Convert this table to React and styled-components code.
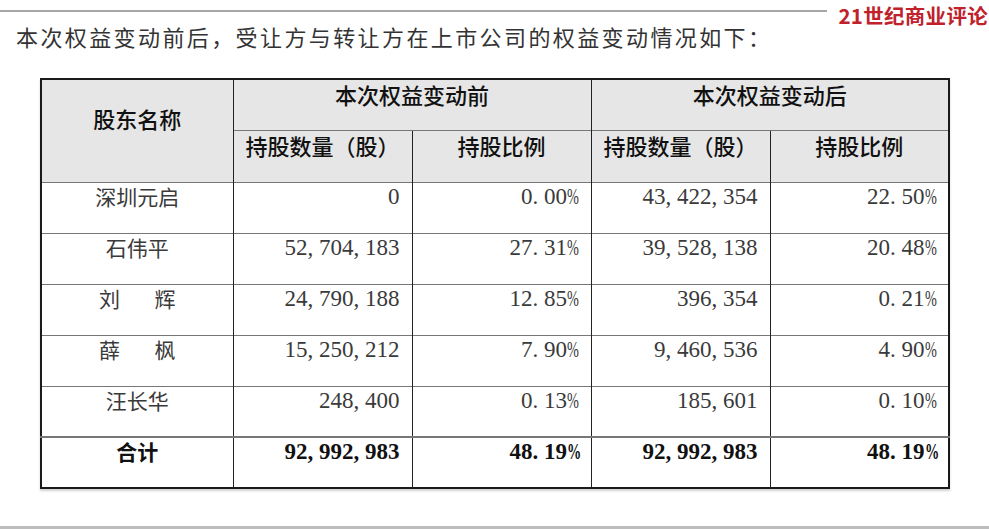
import React from 'react'
import styled, { createGlobalStyle } from 'styled-components'

const GlobalStyle = createGlobalStyle`
  html, body {
    margin: 0;
    padding: 0;
    background: #fff;
  }
`

const cjk = `"Noto Sans CJK SC", "Noto Sans", sans-serif`
const serif = `"Liberation Serif", "Noto Sans CJK SC", serif`

const Page = styled.div`
  height: 529px;
  width: 989px;
  display: flex;
  flex-direction: column;
  overflow: hidden;
  font-family: ${cjk};
`

const TopBar = styled.div`
  height: 22px;
  display: flex;
  align-items: center;
`

const Rule = styled.div`
  flex: 1;
  height: 2px;
  background: #a6a6a6;
  margin-right: 11px;
`

const Logo = styled.div`
  align-self: flex-start;
  font-size: 20.5px;
  font-weight: 700;
  line-height: normal;
  letter-spacing: 0.3px;
  color: #c0212b;
  white-space: nowrap;
  margin-right: 1px;
`

const Title = styled.p`
  margin: 2px 0 0;
  padding-left: 16px;
  font-size: 22px;
  line-height: 24px;
  letter-spacing: 2.4px;
  color: #333;
  white-space: nowrap;
`

const Table = styled.table`
  margin: 30px 0 0 40px;
  width: 908px;
  border-collapse: collapse;
  table-layout: fixed;
  border: 2px solid #1a1a1a;
  box-shadow: 0 2px 2px rgba(0, 0, 0, 0.18);
`

const HeadRow = styled.tr`
  height: ${p => p.$h}px;
  background: #e6e6e6;
`

const BodyRow = styled.tr`
  height: 51px;
`

const HeadCell = styled.th`
  vertical-align: top;
  padding: ${p => p.$top ?? 0}px 0 0;
  font-size: 22px;
  line-height: 28px;
  font-weight: 500;
  color: #111;
  text-align: center;
  border-left: 1px solid #222;
  border-top: 1px solid #777;
  white-space: nowrap;
`

const Cell = styled.td`
  vertical-align: top;
  padding: 0 12px 0 0;
  text-align: ${p => (p.$center ? 'center' : 'right')};
  font-family: ${p => (p.$center ? cjk : serif)};
  font-size: ${p => (p.$center ? 21 : 23)}px;
  font-weight: ${p => (p.$bold ? 700 : 400)};
  line-height: ${p => (p.$center ? 26 : 28)}px;
  color: ${p => (p.$bold ? '#111' : '#3a3a3a')};
  border-left: 1px solid #222;
  border-top: ${p => (p.$bold ? '2px solid #777' : '1px solid #777')};
  white-space: nowrap;
  ${p => p.$center && 'padding: 0;'}
`

const Spread = styled.span`
  display: inline-flex;
  justify-content: space-between;
  width: 3.65em;
`

const Punct = styled.span`
  display: inline-block;
  width: 0.5em;
  text-align: left;
`

const Pct = styled.span`
  display: inline-block;
  width: 0.5em;
  text-align: left;
  transform: scaleX(0.62);
  transform-origin: left center;
`

const BottomBar = styled.div`
  margin-top: auto;
  height: 3px;
  background: #bdbdbd;
`

const Num = ({ value }) =>
  value.split('').map((c, i) =>
    c === ',' || c === '.' ? (
      <Punct key={i}>{c}</Punct>
    ) : c === '%' ? (
      <Pct key={i}>%</Pct>
    ) : (
      c
    )
  )

const rows = [
  { name: '深圳元启', a: '0', b: '0.00%', c: '43,422,354', d: '22.50%' },
  { name: '石伟平', a: '52,704,183', b: '27.31%', c: '39,528,138', d: '20.48%' },
  { name: ['刘', '辉'], a: '24,790,188', b: '12.85%', c: '396,354', d: '0.21%' },
  { name: ['薛', '枫'], a: '15,250,212', b: '7.90%', c: '9,460,536', d: '4.90%' },
  { name: '汪长华', a: '248,400', b: '0.13%', c: '185,601', d: '0.10%' },
]

export default function App() {
  return (
    <Page>
      <GlobalStyle />
      <TopBar>
        <Rule />
        <Logo>21世纪商业评论</Logo>
      </TopBar>
      <Title>本次权益变动前后，受让方与转让方在上市公司的权益变动情况如下：</Title>
      <Table>
        <colgroup>
          <col style={{ width: 192 }} />
          <col style={{ width: 179 }} />
          <col style={{ width: 179 }} />
          <col style={{ width: 179 }} />
          <col style={{ width: 179 }} />
        </colgroup>
        <thead>
          <HeadRow $h={51}>
            <HeadCell rowSpan={2} $top={24}>
              股东名称
            </HeadCell>
            <HeadCell colSpan={2}>本次权益变动前</HeadCell>
            <HeadCell colSpan={2}>本次权益变动后</HeadCell>
          </HeadRow>
          <HeadRow $h={52}>
            <HeadCell>持股数量（股）</HeadCell>
            <HeadCell>持股比例</HeadCell>
            <HeadCell>持股数量（股）</HeadCell>
            <HeadCell>持股比例</HeadCell>
          </HeadRow>
        </thead>
        <tbody>
          {rows.map(r => (
            <BodyRow key={r.a}>
              <Cell $center>
                {Array.isArray(r.name) ? (
                  <Spread>
                    <span>{r.name[0]}</span>
                    <span>{r.name[1]}</span>
                  </Spread>
                ) : (
                  r.name
                )}
              </Cell>
              <Cell><Num value={r.a} /></Cell>
              <Cell><Num value={r.b} /></Cell>
              <Cell><Num value={r.c} /></Cell>
              <Cell><Num value={r.d} /></Cell>
            </BodyRow>
          ))}
          <BodyRow>
            <Cell $center $bold>合计</Cell>
            <Cell $bold><Num value="92,992,983" /></Cell>
            <Cell $bold><Num value="48.19%" /></Cell>
            <Cell $bold><Num value="92,992,983" /></Cell>
            <Cell $bold><Num value="48.19%" /></Cell>
          </BodyRow>
        </tbody>
      </Table>
      <BottomBar />
    </Page>
  )
}
